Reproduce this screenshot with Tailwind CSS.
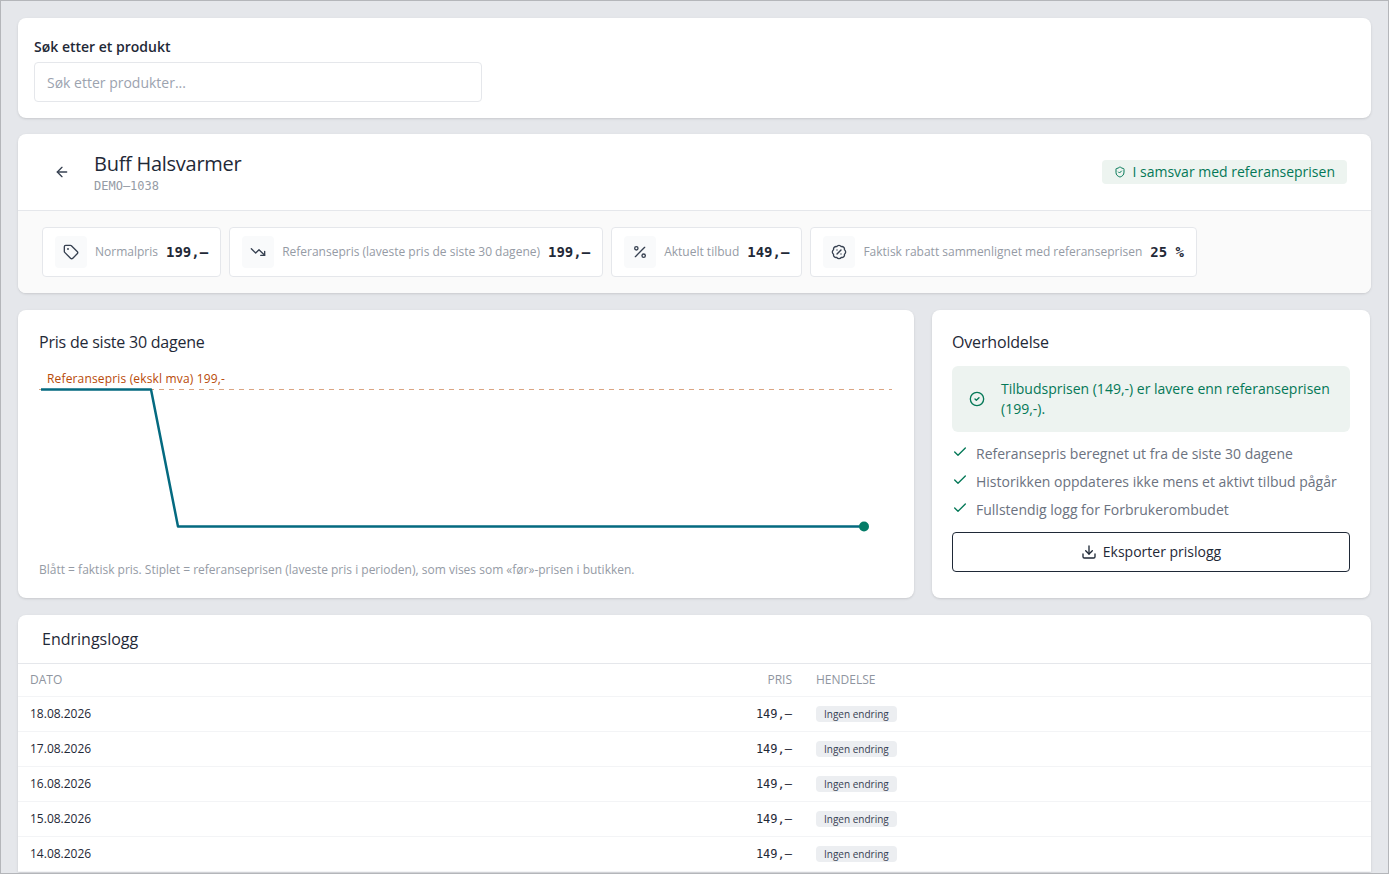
<!DOCTYPE html>
<html lang="nb">
<head>
    <meta charset="UTF-8">
    <title>Prislogg</title>
    <script src="https://cdn.jsdelivr.net/npm/@tailwindcss/browser@4"></script>
</head>
<body class="bg-[#e5e7eb] font-['Open_Sans',sans-serif] text-[#1f2937]">
<div class="h-[874px] overflow-hidden border border-[#b4b6ba] pt-[17px] pl-[17px] pr-[17px] flex flex-col">

    <!-- search -->
    <section class="h-[100px] shrink-0 bg-white rounded-lg shadow-sm px-4 pt-[19px]">
        <label class="block text-sm font-semibold leading-5 text-[#1f2937]">Søk etter et produkt</label>
        <div class="mt-[5px] w-[448px] h-10 border border-[#e5e7eb] rounded flex items-center px-3 pt-[2px] text-sm text-[#9ca3af]">Søk etter produkter...</div>
    </section>

    <!-- product -->
    <section class="mt-4 h-[159px] shrink-0 bg-white rounded-lg shadow-sm overflow-hidden flex flex-col">
        <div class="h-[77px] shrink-0 border-b border-[#e5e7eb] flex items-center pl-[36px] pr-6">
            <svg class="w-4 h-4 text-[#374151]" viewBox="0 0 24 24" fill="none" stroke="currentColor" stroke-width="2" stroke-linecap="round" stroke-linejoin="round"><path d="M19 12H5"/><path d="m12 19-7-7 7-7"/></svg>
            <div class="ml-6">
                <h1 class="text-xl leading-7 font-medium tracking-[-0.27px] text-[#1f2937]">Buff Halsvarmer</h1>
                <p class="font-['DejaVu_Sans_Mono',monospace] text-xs leading-4 text-[#959ba5]">DEMO–1038</p>
            </div>
            <div class="ml-auto h-6 flex items-center gap-[6px] rounded bg-[#edf4f0] px-3 text-sm text-[#047857]">
                <svg class="w-3 h-3" viewBox="0 0 24 24" fill="none" stroke="currentColor" stroke-width="2" stroke-linecap="round" stroke-linejoin="round"><path d="M20 13c0 5-3.500 7.500-7.660 8.950a1 1 0 0 1-.67-.01C7.500 20.500 4 18 4 13V6a1 1 0 0 1 1-1c2 0 4.500-1.200 6.240-2.720a1.170 1.170 0 0 1 1.520 0C14.510 3.810 17 5 19 5a1 1 0 0 1 1 1z"/><path d="m9 12 2 2 4-4"/></svg>
                I samsvar med referanseprisen
            </div>
        </div>
        <div class="flex-1 bg-[#fafafa] flex gap-2 pl-6 pt-4">
            <div class="h-[50px] flex items-center border border-[#e5e7eb] rounded bg-white pl-3 pr-3">
                <span class="w-8 h-8 rounded bg-[#f9fafb] flex items-center justify-center text-[#374151]">
                    <svg class="w-4 h-4" viewBox="0 0 24 24" fill="none" stroke="currentColor" stroke-width="2" stroke-linecap="round" stroke-linejoin="round"><path d="M12.586 2.586A2 2 0 0 0 11.172 2H4a2 2 0 0 0-2 2v7.172a2 2 0 0 0 .586 1.414l8.704 8.704a2.426 2.426 0 0 0 3.420 0l6.580-6.580a2.426 2.426 0 0 0 0-3.420z"/><circle cx="7.500" cy="7.500" r=".5" fill="currentColor"/></svg>
                </span>
                <span class="ml-2 text-xs text-[#959ba5]">Normalpris</span>
                <span class="ml-2 font-['DejaVu_Sans_Mono',monospace] font-bold text-sm text-[#1f2937]">199,–</span>
            </div>
            <div class="h-[50px] flex items-center border border-[#e5e7eb] rounded bg-white pl-3 pr-3">
                <span class="w-8 h-8 rounded bg-[#f9fafb] flex items-center justify-center text-[#374151]">
                    <svg class="w-4 h-4" viewBox="0 0 24 24" fill="none" stroke="currentColor" stroke-width="2" stroke-linecap="round" stroke-linejoin="round"><path d="M16 17h6v-6"/><path d="m22 17-8.500-8.500-5 5L2 7"/></svg>
                </span>
                <span class="ml-2 text-xs text-[#959ba5]">Referansepris (laveste pris de siste 30 dagene)</span>
                <span class="ml-2 font-['DejaVu_Sans_Mono',monospace] font-bold text-sm text-[#1f2937]">199,–</span>
            </div>
            <div class="h-[50px] flex items-center border border-[#e5e7eb] rounded bg-white pl-3 pr-3">
                <span class="w-8 h-8 rounded bg-[#f9fafb] flex items-center justify-center text-[#374151]">
                    <svg class="w-4 h-4" viewBox="0 0 24 24" fill="none" stroke="currentColor" stroke-width="2" stroke-linecap="round" stroke-linejoin="round"><line x1="19" x2="5" y1="5" y2="19"/><circle cx="6.500" cy="6.500" r="2.500"/><circle cx="17.500" cy="17.500" r="2.500"/></svg>
                </span>
                <span class="ml-2 text-xs text-[#959ba5]">Aktuelt tilbud</span>
                <span class="ml-2 font-['DejaVu_Sans_Mono',monospace] font-bold text-sm text-[#1f2937]">149,–</span>
            </div>
            <div class="h-[50px] flex items-center border border-[#e5e7eb] rounded bg-white pl-3 pr-3">
                <span class="w-8 h-8 rounded bg-[#f9fafb] flex items-center justify-center text-[#374151]">
                    <svg class="w-4 h-4" viewBox="0 0 24 24" fill="none" stroke="currentColor" stroke-width="2" stroke-linecap="round" stroke-linejoin="round"><path d="M3.850 8.620a4 4 0 0 1 4.780-4.770 4 4 0 0 1 6.740 0 4 4 0 0 1 4.780 4.780 4 4 0 0 1 0 6.740 4 4 0 0 1-4.770 4.780 4 4 0 0 1-6.750 0 4 4 0 0 1-4.780-4.770 4 4 0 0 1 0-6.760Z"/><path d="m15 9-6 6"/><path d="M9 9h.01"/><path d="M15 15h.01"/></svg>
                </span>
                <span class="ml-2 text-xs text-[#959ba5]">Faktisk rabatt sammenlignet med referanseprisen</span>
                <span class="ml-2 font-['DejaVu_Sans_Mono',monospace] font-bold text-sm text-[#1f2937]">25 %</span>
            </div>
        </div>
    </section>

    <!-- chart + compliance -->
    <div class="mt-[17px] h-[288px] shrink-0 flex gap-[18px]">
        <section class="w-[896px] shrink-0 bg-white rounded-lg shadow-sm pl-[21px] pt-5 flex flex-col">
            <h2 class="text-base leading-6 font-medium tracking-[-0.22px] text-[#1f2937]">Pris de siste 30 dagene</h2>
            <div class="relative mt-4 h-[170px]">
                <svg class="absolute left-0 top-0" width="875" height="170" viewBox="0 0 875 170" fill="none">
                    <line x1="0" y1="19.500" x2="853" y2="19.500" stroke="#dba583" stroke-width="1" stroke-dasharray="5 5"/>
                    <polyline points="2,19.500 112,19.500 139,156.500 825,156.500" stroke="#046a80" stroke-width="2.500" stroke-linejoin="round"/>
                    <circle cx="825" cy="156.500" r="5" fill="#047c67"/>
                </svg>
                <span class="absolute left-[8px] top-0 text-xs leading-[18px] tracking-[0.16px] text-[#b84a08]">Referansepris (ekskl mva) 199,-</span>
            </div>
            <p class="mt-[22px] text-xs leading-4 text-[#959ba5]">Blått = faktisk pris. Stiplet = referanseprisen (laveste pris i perioden), som vises som «før»-prisen i butikken.</p>
        </section>

        <section class="w-[438px] shrink-0 bg-white rounded-lg shadow-sm px-5 pt-5">
            <h2 class="text-base leading-6 font-medium tracking-[-0.17px] text-[#1f2937]">Overholdelse</h2>
            <div class="mt-3 h-[66px] rounded-md bg-[#edf3f0] flex items-center pl-[17px] pr-4 text-[#047857]">
                <svg class="w-4 h-4 shrink-0" viewBox="0 0 24 24" fill="none" stroke="currentColor" stroke-width="2" stroke-linecap="round" stroke-linejoin="round"><circle cx="12" cy="12" r="10"/><path d="m9 12 2 2 4-4"/></svg>
                <p class="ml-4 text-sm leading-5">Tilbudsprisen (149,-) er lavere enn referanseprisen (199,-).</p>
            </div>
            <ul class="mt-2 text-sm text-[#6b7280]">
                <li class="h-7 flex items-center"><svg class="w-4 h-4 text-[#047857] mb-[4px]" viewBox="0 0 24 24" fill="none" stroke="currentColor" stroke-width="2" stroke-linecap="round" stroke-linejoin="round"><path d="M20 6 9 17l-5-5"/></svg><span class="ml-[8px]">Referansepris beregnet ut fra de siste 30 dagene</span></li>
                <li class="h-7 flex items-center"><svg class="w-4 h-4 text-[#047857] mb-[4px]" viewBox="0 0 24 24" fill="none" stroke="currentColor" stroke-width="2" stroke-linecap="round" stroke-linejoin="round"><path d="M20 6 9 17l-5-5"/></svg><span class="ml-[8px]">Historikken oppdateres ikke mens et aktivt tilbud pågår</span></li>
                <li class="h-7 flex items-center"><svg class="w-4 h-4 text-[#047857] mb-[4px]" viewBox="0 0 24 24" fill="none" stroke="currentColor" stroke-width="2" stroke-linecap="round" stroke-linejoin="round"><path d="M20 6 9 17l-5-5"/></svg><span class="ml-[8px]">Fullstendig logg for Forbrukerombudet</span></li>
            </ul>
            <button class="mt-[8px] w-full h-10 border border-[#1f2937] rounded flex items-center justify-center gap-[6px] text-sm font-medium text-[#1f2937]">
                <svg class="w-4 h-4" viewBox="0 0 24 24" fill="none" stroke="currentColor" stroke-width="2" stroke-linecap="round" stroke-linejoin="round"><path d="M12 15V3"/><path d="M21 15v4a2 2 0 0 1-2 2H5a2 2 0 0 1-2-2v-4"/><path d="m7 10 5 5 5-5"/></svg>
                Eksporter prislogg
            </button>
        </section>
    </div>

    <!-- log -->
    <section class="mt-[17px] shrink-0 bg-white rounded-t-lg shadow-sm">
        <h2 class="h-[48px] px-6 flex items-center text-base font-medium text-[#1f2937] border-b border-[#e5e7eb] box-content">Endringslogg</h2>
        <table class="w-full text-xs">
            <thead>
                <tr class="h-[32px] border-b border-[#f3f4f6] text-[#8f95a0]">
                    <th class="pl-3 text-left font-normal">DATO</th>
                    <th class="w-[140px] pr-3 text-right font-normal">PRIS</th>
                    <th class="w-[567px] pl-3 text-left font-normal">HENDELSE</th>
                </tr>
            </thead>
            <tbody>
                <tr class="h-[35px] border-b border-[#f3f4f6]"><td class="pl-3">18.08.2026</td><td class="pr-3 text-right font-['DejaVu_Sans_Mono',monospace]">149,–</td><td class="pl-3"><span class="inline-block rounded bg-[#eceef1] px-2 text-[10px] leading-4 text-[#374151]">Ingen endring</span></td></tr>
                <tr class="h-[35px] border-b border-[#f3f4f6]"><td class="pl-3">17.08.2026</td><td class="pr-3 text-right font-['DejaVu_Sans_Mono',monospace]">149,–</td><td class="pl-3"><span class="inline-block rounded bg-[#eceef1] px-2 text-[10px] leading-4 text-[#374151]">Ingen endring</span></td></tr>
                <tr class="h-[35px] border-b border-[#f3f4f6]"><td class="pl-3">16.08.2026</td><td class="pr-3 text-right font-['DejaVu_Sans_Mono',monospace]">149,–</td><td class="pl-3"><span class="inline-block rounded bg-[#eceef1] px-2 text-[10px] leading-4 text-[#374151]">Ingen endring</span></td></tr>
                <tr class="h-[35px] border-b border-[#f3f4f6]"><td class="pl-3">15.08.2026</td><td class="pr-3 text-right font-['DejaVu_Sans_Mono',monospace]">149,–</td><td class="pl-3"><span class="inline-block rounded bg-[#eceef1] px-2 text-[10px] leading-4 text-[#374151]">Ingen endring</span></td></tr>
                <tr class="h-[35px] border-b border-[#f3f4f6]"><td class="pl-3">14.08.2026</td><td class="pr-3 text-right font-['DejaVu_Sans_Mono',monospace]">149,–</td><td class="pl-3"><span class="inline-block rounded bg-[#eceef1] px-2 text-[10px] leading-4 text-[#374151]">Ingen endring</span></td></tr>
            </tbody>
        </table>
    </section>
</div>
</body>
</html>
